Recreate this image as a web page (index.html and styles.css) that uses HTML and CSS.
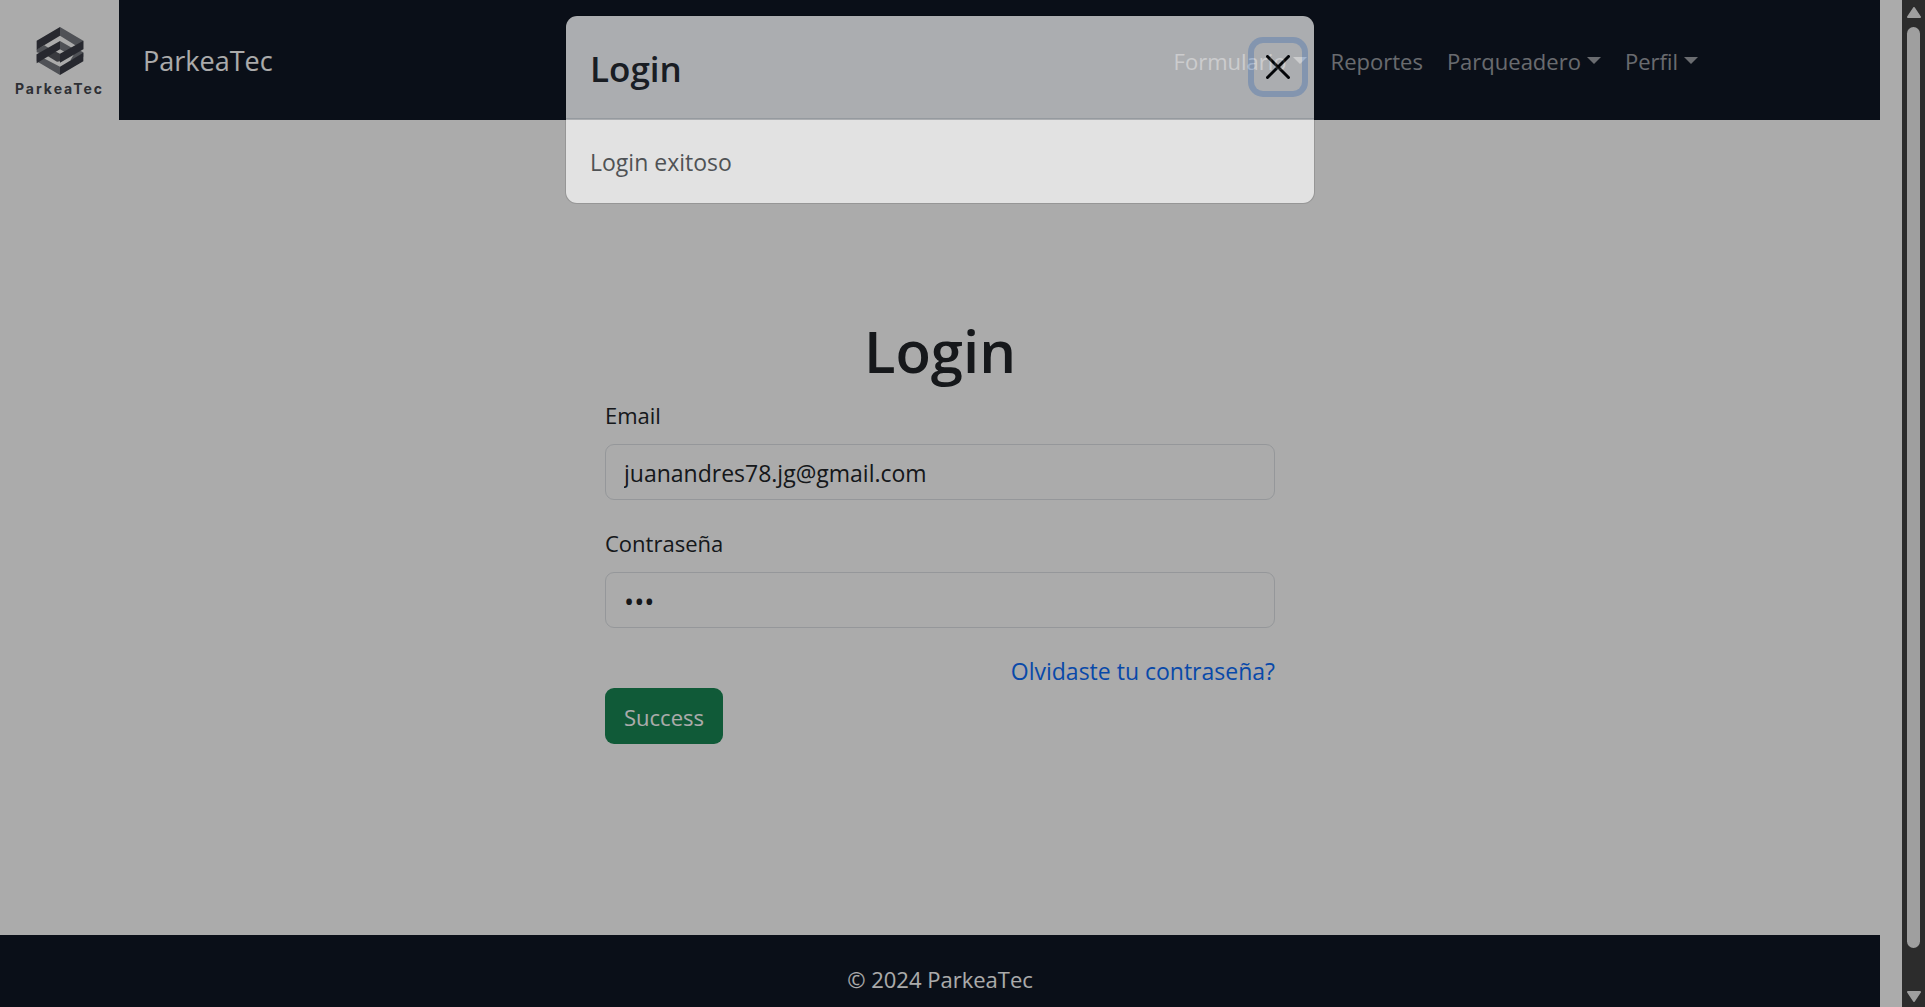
FILE: index.html
```html
<!DOCTYPE html>
<html lang="es">
<head>
<meta charset="utf-8">
<title>ParkeaTec</title>
<link rel="stylesheet" href="styles.css">
</head>
<body>
<div class="screen">
  <div class="viewport">
    <div class="page">
      <header class="navbar">
        <a class="logo" href="#" aria-label="ParkeaTec">
          <svg class="logo-mark" viewBox="77 18 144 150" aria-hidden="true">
            <path fill="#777a80" d="M149 21 219 62V88L195 76 149 47zM149 63 191 87 170 100 149 88zM219 97V110L180 121 200 88zM79 88 102 76 125 90 103 103 79 97zM79 103 103 116 149 140V165L79 124z"/>
            <path fill="#55575e" d="M103 103 126 90 149 101V124L140 125z"/>
            <path fill="#3b3d46" d="M149 21 79 62V89L149 47zM149 63 79 103V130L149 88zM219 62 149 101V128L219 88zM219 98 149 140V165L219 124z"/>
          </svg>
          <span class="logo-name">ParkeaTec</span>
        </a>
        <a class="brand" href="#">ParkeaTec</a>
        <nav class="nav">
          <a class="nav-link dropdown" href="#">Formulario</a>
          <a class="nav-link" href="#">Reportes</a>
          <a class="nav-link dropdown" href="#">Parqueadero</a>
          <a class="nav-link dropdown" href="#">Perfil</a>
        </nav>
      </header>
      <main class="main">
        <form class="login">
          <h1 class="title">Login</h1>
          <div class="field">
            <label class="label" for="email">Email</label>
            <input class="control" id="email" type="email" value="juanandres78.jg@gmail.com">
          </div>
          <div class="field">
            <label class="label" for="password">Contraseña</label>
            <input class="control control-password" id="password" type="password" value="123">
          </div>
          <a class="forgot" href="#">Olvidaste tu contraseña?</a>
          <button class="submit" type="button">Success</button>
        </form>
      </main>
      <footer class="footer">© 2024 ParkeaTec</footer>
    </div>
    <div class="backdrop">
      <section class="modal" role="dialog" aria-labelledby="modal-title">
        <div class="modal-header">
          <h2 class="modal-title" id="modal-title">Login</h2>
          <button class="close" type="button" aria-label="Close">
            <svg viewBox="0 0 16 16" aria-hidden="true"><path d="M1 1 15 15M15 1 1 15" stroke="#000" stroke-width="2" stroke-linecap="round"/></svg>
          </button>
        </div>
        <div class="modal-body">Login exitoso</div>
      </section>
    </div>
  </div>
  <div class="scrollbar" aria-hidden="true">
    <svg class="arrow" viewBox="0 0 14 11"><path d="M7 1 13 10H1z"/></svg>
    <div class="thumb"></div>
    <svg class="arrow" viewBox="0 0 14 11"><path d="M7 10 13 1H1z"/></svg>
  </div>
</div>
</body>
</html>
```

FILE: styles.css
```css
* { box-sizing: border-box; }
body {
  margin: 0;
  font: 23px/36px "Open Sans", "Noto Sans", sans-serif;
  color: #212529;
  background: #fff;
}
a { text-decoration: none; }
.screen { display: flex; height: 100vh; overflow: hidden; }
.viewport { flex: 1; position: relative; }
.page {
  display: flex;
  flex-direction: column;
  height: 100%;
  padding-right: 22px;
}

.navbar { display: flex; align-items: center; height: 120px; background: #101725; }
.logo {
  display: flex;
  flex-direction: column;
  align-items: center;
  gap: 4px;
  width: 119px;
  height: 120px;
  padding-top: 26px;
  background: #fff;
  color: #45484f;
}
.logo-mark { width: 48px; height: 50px; }
.logo-name { font: 700 14px/18px Inter, sans-serif; letter-spacing: 2px; }
.brand { padding-top: 2px; margin-left: 24px; font-size: 27px; color: #fff; }
.nav { display: flex; margin-left: auto; margin-right: 170px; }
.nav-link { padding: 14px 12px 12px; font-size: 22px; color: rgba(255, 255, 255, .6); }
.dropdown::after {
  content: "";
  display: inline-block;
  margin-left: 6px;
  vertical-align: 6px;
  border: 7px solid transparent;
  border-top-color: currentColor;
  border-bottom: 0;
}

.main { flex: 1; padding: 195px 24px 0; }
.login { display: flex; flex-direction: column; max-width: 670px; margin: 0 auto; }
.title { margin: 0 0 9px; font-size: 58px; line-height: 72px; font-weight: 600; text-align: center; }
.field { display: flex; flex-direction: column; gap: 10px; margin-bottom: 24px; }
.label { font-size: 22px; line-height: 38px; }
.control {
  width: 100%;
  height: 56px;
  padding: 2px 18px 0;
  border: 1px solid #dee2e6;
  border-radius: 9px;
  background: #fff;
  font: inherit;
  color: inherit;
}
.control-password { font-size: 27px; }
.forgot { align-self: flex-end; padding-top: 1px; margin-bottom: -1px; color: #0d6efd; }
.submit {
  align-self: flex-start;
  height: 56px;
  padding: 2px 19px 0;
  border: 0;
  border-radius: 9px;
  background: #198754;
  color: #fff;
  font: inherit;
  font-size: 22px;
}
.footer { height: 72px; padding-top: 26px; background: #101725; color: #fff; font-size: 22px; text-align: center; }

.backdrop {
  position: absolute;
  inset: 0;
  padding: 15px 22px 0 0;
  background: rgba(0, 0, 0, .33);
}
.modal {
  max-width: 750px;
  margin: 0 auto;
  border: 1px solid rgba(0, 0, 0, .18);
  border-radius: 12px;
  background: #fff;
  background-clip: padding-box;
  opacity: .66;
}
.modal-header {
  display: flex;
  align-items: center;
  justify-content: space-between;
  padding: 24px 12px 24px 24px;
  border-bottom: 1px solid #dee2e6;
}
.modal-title { padding-top: 4px; margin: 0; font-size: 35px; line-height: 50px; font-weight: 600; }
.close {
  display: flex;
  width: 48px;
  height: 48px;
  padding: 12px;
  margin: 3px 0;
  border: 0;
  border-radius: 9px;
  background: none;
  box-shadow: 0 0 0 6px rgba(13, 110, 253, .25);
}
.modal-body { padding: 25px 24px 23px; }

.scrollbar {
  display: flex;
  flex-direction: column;
  align-items: center;
  gap: 9px;
  width: 23px;
  padding: 7px 0 5px;
  background: #2c2c2c;
}
.arrow { width: 14px; height: 11px; fill: #9f9f9f; stroke: #9f9f9f; stroke-width: 2; stroke-linejoin: round; }
.thumb { flex: 1; width: 13px; margin-bottom: 34px; border-radius: 7px; background: #9f9f9f; }
```
